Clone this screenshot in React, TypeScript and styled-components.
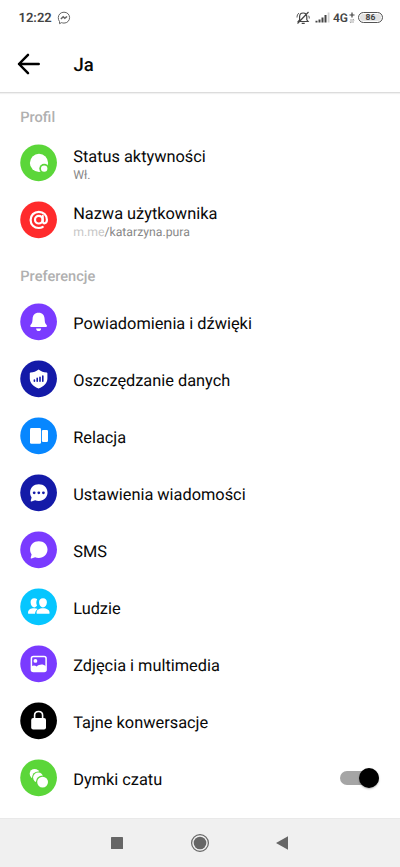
import React from 'react';
import styled, { createGlobalStyle } from 'styled-components';

const GlobalStyle = createGlobalStyle`
  * { box-sizing: border-box; }
  body {
    margin: 0;
    background: #fff;
    color: #080808;
    font-family: Roboto, "Noto Sans", sans-serif;
    text-rendering: geometricPrecision;
  }
  svg { display: block; flex-shrink: 0; overflow: visible; }
`;

const Screen = styled.div`
  width: 400px;
  height: 867px;
  display: flex;
  flex-direction: column;
  overflow: hidden;
  background: #fff;
`;

const StatusBar = styled.div`
  height: 35px;
  flex-shrink: 0;
  display: flex;
  align-items: center;
  padding: 0 17px 0 18.5px;
  color: #444;
`;

const Clock = styled.span`
  width: 38.5px;
  padding-top: 2px;
  font-size: 13px;
  font-weight: 600;
  line-height: 16px;
  letter-spacing: 0;
`;

const StatusIcons = styled.div`
  display: flex;
  align-items: center;
  margin-left: auto;
`;

const SignalIcon = styled.svg`
  margin-left: 5px;
`;

const Network = styled.span`
  width: 16px;
  margin-left: 3px;
  font-size: 12px;
  line-height: 16px;
  font-weight: 600;
`;

const Battery = styled.span`
  width: 25px;
  height: 11px;
  margin-left: 3px;
  border: 1px solid #555;
  border-radius: 6px;
  background: #e2e2e2;
  box-shadow: inset 0 0 0 1px #fff;
  font-size: 8.5px;
  line-height: 10px;
  font-weight: 700;
  text-align: center;
`;

const Header = styled.header`
  height: 58px;
  flex-shrink: 0;
  display: flex;
  align-items: center;
  padding: 0 17px;
  border-bottom: 1px solid #dcdcdc;
  box-shadow: 0 1px 1px #f1f1f1;
`;

const Title = styled.h1`
  margin: 2px 0 0 33.5px;
  font-size: 18.5px;
  line-height: 24px;
  font-weight: 500;
`;

const Content = styled.main`
  flex: 1;
  min-height: 0;
`;

const SectionTitle = styled.h2<{ $height: number; $top: number }>`
  height: ${({ $height }) => $height}px;
  margin: 0;
  padding: ${({ $top }) => $top}px 20.3px 0;
  font-size: 14.6px;
  line-height: 20px;
  font-weight: 500;
  color: #b0b0b0;
`;

const Row = styled.div`
  height: 57px;
  display: flex;
  align-items: center;
  padding: 0 21px 0 20px;
`;

const Labels = styled.div<{ $double?: boolean }>`
  flex: 1;
  margin-left: 16.2px;
  padding-top: ${({ $double }) => ($double ? 5 : 4)}px;
`;

const Label = styled.div`
  font-size: 16.35px;
  line-height: 20px;
`;

const Detail = styled.div`
  font-size: 12.25px;
  line-height: 17px;
  color: #888;
`;

const Muted = styled.span`
  color: #c8c8c8;
`;

const Switch = styled.div`
  width: 39px;
  height: 14px;
  display: flex;
  align-items: center;
  justify-content: flex-end;
  border-radius: 7px;
  background: #a5a5a5;
`;

const Thumb = styled.span`
  width: 20px;
  height: 20px;
  border-radius: 50%;
  background: #000;
  box-shadow: 0 1px 2px rgba(0, 0, 0, 0.3);
`;

const NavBar = styled.nav`
  height: 49px;
  flex-shrink: 0;
  display: grid;
  grid-template-columns: 82px 82px 82px;
  justify-content: center;
  place-items: center;
  background: #f0f0f0;
  border-top: 1px solid #e9e9e9;
`;

const RecentsIcon = styled.svg`
  margin-right: 2px;
`;

const Badge = ({ color, children }: { color: string; children: React.ReactNode }) => (
  <svg width="37" height="37" viewBox="0 0 37 37" fill="#fff">
    <circle cx="18.6" cy="18.8" r="18.35" fill={color} />
    {children}
  </svg>
);

const GREEN = '#5bd639';
const PURPLE = '#7a3bff';
const NAVY = '#141aa8';

const ActivityIcon = () => (
  <Badge color={GREEN}>
    <circle cx="19" cy="18.9" r="9.1" />
    <circle cx="24.2" cy="24.6" r="4.9" fill={GREEN} />
    <circle cx="24.2" cy="24.6" r="3.2" />
  </Badge>
);

const AtIcon = () => (
  <Badge color="#ff2b2c">
    <g fill="none" stroke="#fff" strokeWidth="2.2" strokeLinecap="round">
      <circle cx="18.8" cy="18.7" r="3.8" />
      <path d="M22.700 14.900v5.100c0 3.400 4.200 3 4.200-1.200 0-4.600-3.400-8-8.100-8s-8.200 3.500-8.200 8.100 3.500 8.100 8.200 8.100c1.600 0 2.800-.4 3.900-1" />
    </g>
  </Badge>
);

const BellIcon = () => (
  <Badge color={PURPLE}>
    <path d="M18.600 9.800c-4 0-5.800 2.600-6 6-.2 4-.8 5-2 6.300-.8 1-.3 2 .7 2h14.600c1 0 1.500-1 .7-2-1.200-1.300-1.800-2.300-2-6.300-.2-3.400-2-6-6-6z" />
    <path d="M16.100 25.400h5c-.2 1.700-1.200 2.700-2.500 2.700s-2.300-1-2.500-2.700z" />
  </Badge>
);

const ShieldIcon = () => (
  <Badge color={NAVY}>
    <path d="M18.600 9.500c2.600 2 5 2.800 8 2.900.5 0 .8.3.8.8v5.300c0 4.800-3.800 8-8.800 10-5-2-8.800-5.200-8.800-10v-5.300c0-.5.3-.8.8-.8 3-.1 5.400-.9 8-2.900z" />
    <path d="M14.400 21.300v-1.300M17.200 21.300v-2.900M20 21.300v-4.100M22.800 21.300v-5.200" stroke={NAVY} strokeWidth="1.600" strokeLinecap="round" />
  </Badge>
);

const StoryIcon = () => (
  <Badge color="#0787ff">
    <rect x="10" y="11" width="11" height="15.800" rx="1.400" />
    <rect x="21.900" y="12.900" width="6.100" height="12" rx="1.200" />
  </Badge>
);

const BUBBLE = 'M18.8 10.200c5 0 8.700 3.500 8.700 8.300s-3.700 8.400-8.700 8.400c-1.500 0-2.600-.3-3.700-.7l-3.600 1.300c-.7.2-1-.2-.8-.8l.9-3.300c-1-1.300-1.500-3-1.500-4.900 0-4.800 3.700-8.300 8.700-8.300z';

const MessageIcon = () => (
  <Badge color={NAVY}>
    <path d={BUBBLE} />
    <g fill={NAVY}>
      <circle cx="14.2" cy="18.8" r="1.4" />
      <circle cx="18.8" cy="18.8" r="1.4" />
      <circle cx="23.4" cy="18.8" r="1.4" />
    </g>
  </Badge>
);

const SmsIcon = () => (
  <Badge color={PURPLE}><path d={BUBBLE} /></Badge>
);

const PeopleIcon = () => (
  <Badge color="#06c6ff">
    <path d="M14.300 10.200c-2.500 0-3.900 1.800-3.700 4.400.2 2.700 1.600 4.800 3.700 4.800 1.200 0 2-.7 2.700-1.800-1-2-.9-4.500.2-6.300-.7-.7-1.700-1.100-2.900-1.100zM8 24.900c0-3.300 2.700-4.700 6.100-4.700 1.500 0 2.700.2 3.600.7-1.600 1.100-2.500 2.700-2.700 4.900H9c-.6 0-1-.3-1-.9z" />
    <path d="M23 10.200c2.600 0 4.100 1.800 3.900 4.400-.2 2.800-1.700 4.900-3.900 4.900s-3.700-2.100-3.900-4.900C18.900 12 20.400 10.200 23 10.200zM16.500 24.900c0-3.200 2.700-4.700 6.500-4.700s6.600 1.500 6.600 4.700c0 .6-.4.900-1 .9H17.500c-.6 0-1-.3-1-.9z" />
  </Badge>
);

const PhotoIcon = () => (
  <Badge color={PURPLE}>
    <rect x="11.400" y="11.600" width="14.700" height="14.800" rx="2" fill="none" stroke="#fff" strokeWidth="1.500" />
    <circle cx="15.400" cy="15.900" r="1.900" />
    <path d="M11.500 21.300c2-1.100 3.500-.9 5.200.1 2.600-2.500 6.700-2.700 9.200-.2v4.100c0 .6-.4 1-1 1H12.500c-.6 0-1-.4-1-1z" />
  </Badge>
);

const LockIcon = () => (
  <Badge color="#000">
    <rect x="11.200" y="16" width="14.800" height="11.600" rx="2" />
    <path d="M14.600 16.700v-3.500c0-5 8-5 8 0v3.500" fill="none" stroke="#fff" strokeWidth="1.600" />
  </Badge>
);

const BubblesIcon = () => (
  <Badge color={GREEN}>
    <circle cx="14.6" cy="14.8" r="4.9" />
    <circle cx="18.2" cy="18.6" r="6.2" fill={GREEN} />
    <circle cx="18.2" cy="18.6" r="5.1" />
    <circle cx="22.6" cy="23.1" r="6.7" fill={GREEN} />
    <circle cx="22.6" cy="23.1" r="5.4" />
  </Badge>
);

const preferences = [
  { label: 'Powiadomienia i dźwięki', Icon: BellIcon },
  { label: 'Oszczędzanie danych', Icon: ShieldIcon },
  { label: 'Relacja', Icon: StoryIcon },
  { label: 'Ustawienia wiadomości', Icon: MessageIcon },
  { label: 'SMS', Icon: SmsIcon },
  { label: 'Ludzie', Icon: PeopleIcon },
  { label: 'Zdjęcia i multimedia', Icon: PhotoIcon },
  { label: 'Tajne konwersacje', Icon: LockIcon },
  { label: 'Dymki czatu', Icon: BubblesIcon, enabled: true },
];

export default function App() {
  return (
    <>
      <GlobalStyle />
      <Screen>
        <StatusBar>
          <Clock>12:22</Clock>
          <svg width="14" height="14" viewBox="0 0 14 14" fill="none" stroke="#666">
            <path d="M7 1.200c3.300 0 5.600 2.400 5.600 5.400S10.300 12.100 7 12.100c-.9 0-1.700-.2-2.400-.5L2.500 12.700v-2.200C1.700 9.500 1.300 8.200 1.300 6.600 1.300 3.600 3.700 1.200 7 1.200z" strokeWidth="1" />
            <path d="M3.900 8.100 6.200 5.700 7.800 7.200 10.100 5.500" strokeWidth="1.500" />
          </svg>
          <StatusIcons>
            <svg width="14" height="14" viewBox="0 0 14 14" fill="none" stroke="#444" strokeWidth="1.200">
              <path d="M2.300 10.500h9.800l-1.300-1.700V5.700C10.800 3.400 9.200 2 7.200 2S3.600 3.400 3.600 5.700v3.100zM5.700 12.300h3M12.500 1 1.500 12.500" />
              <path d="M1 6.500C1 4.500 1.700 3 3 2M13.300 7.500c0-1-.2-2-.6-2.800" strokeWidth=".9" />
            </svg>
            <SignalIcon width="15" height="11" viewBox="0 0 15 11">
              <path d="M1.500 10.500V8.800M4.500 10.500V7.500M7.500 10.500V5.500M10.500 10.500V3" stroke="#444" strokeWidth="2" />
              <path d="M13.600 10.500V.5" stroke="#d2d2d2" strokeWidth="1.800" />
            </SignalIcon>
            <Network>4G</Network>
            <svg width="6" height="12" viewBox="0 0 6 12" fill="none">
              <path d="M.5 3h5M3 .5v5" stroke="#444" strokeWidth="1.200" />
              <path d="M2 7v4L.7 9.800M4 11V7l1.300 1.200" stroke="#aaa" />
            </svg>
            <Battery>86</Battery>
          </StatusIcons>
        </StatusBar>
        <Header>
          <svg width="23" height="22" viewBox="0 0 23 22" fill="none" stroke="#000" strokeWidth="2.500" strokeLinecap="round" strokeLinejoin="round">
            <path d="M11 1.800 2 11l9 9.200M2 11h19.700" />
          </svg>
          <Title>Ja</Title>
        </Header>
        <Content>
          <SectionTitle $height={41} $top={14}>Profil</SectionTitle>
          <Row>
            <ActivityIcon />
            <Labels $double><Label>Status aktywności</Label><Detail>Wł.</Detail></Labels>
          </Row>
          <Row>
            <AtIcon />
            <Labels $double>
              <Label>Nazwa użytkownika</Label>
              <Detail><Muted>m.me</Muted>/katarzyna.pura</Detail>
            </Labels>
          </Row>
          <SectionTitle $height={45} $top={18}>Preferencje</SectionTitle>
          {preferences.map(({ label, Icon, enabled }) => (
            <Row key={label}>
              <Icon />
              <Labels><Label>{label}</Label></Labels>
              {enabled && <Switch role="switch" aria-checked="true"><Thumb /></Switch>}
            </Row>
          ))}
        </Content>
        <NavBar>
          <RecentsIcon width="12" height="12"><rect width="12" height="12" rx=".6" fill="#666" /></RecentsIcon>
          <svg width="18" height="18" viewBox="0 0 18 18">
            <circle cx="9" cy="9" r="8.400" fill="none" stroke="#666" strokeWidth="1.200" />
            <circle cx="9" cy="9" r="6.300" fill="#666" />
          </svg>
          <svg width="12" height="14"><path d="M0 7 12 .3v13.400z" fill="#666" /></svg>
        </NavBar>
      </Screen>
    </>
  );
}
